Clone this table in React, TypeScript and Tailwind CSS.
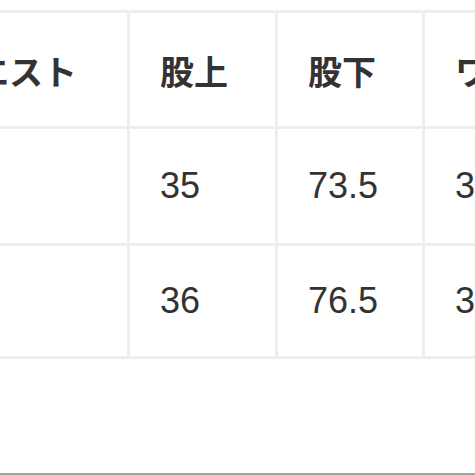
import React from "react";

const header = ["ウエスト", "股上", "股下", "ワタリ"];
const rows = [
  { h: "h-[114px]", cells: ["30", "35", "73.5", "35"] },
  { h: "h-[110px]", cells: ["32", "36", "76.5", "36"] },
];

export default function App() {
  return (
    <div
      className="w-[475px] h-[475px] overflow-hidden bg-white flex flex-col"
      style={{ fontFamily: '"Liberation Sans", "Noto Sans CJK JP", sans-serif' }}
    >
      <div className="pt-[10px]">
        <div className="ml-[-92px] w-max grid grid-cols-[216px_145px_144px_160px] gap-[3px] p-[3px] bg-[#eeeeee]">
          {header.map((t) => (
            <div
              key={t}
              className="h-[113px] bg-white flex items-center pl-[30px] pt-[2px] text-[34px] font-bold text-[#333333] whitespace-nowrap"
              style={{ fontFamily: '"Noto Sans CJK JP", sans-serif' }}
            >
              {t}
            </div>
          ))}
          {rows.map((r, i) =>
            r.cells.map((c, j) => (
              <div
                key={`${i}-${j}`}
                className={`${r.h} bg-white flex items-center pl-[30px] text-[36px] text-[#333333] whitespace-nowrap`}
              >
                {c}
              </div>
            ))
          )}
        </div>
      </div>
      <div className="flex-1" />
      <div className="h-[2px] bg-[#a3a3a3]" />
    </div>
  );
}
